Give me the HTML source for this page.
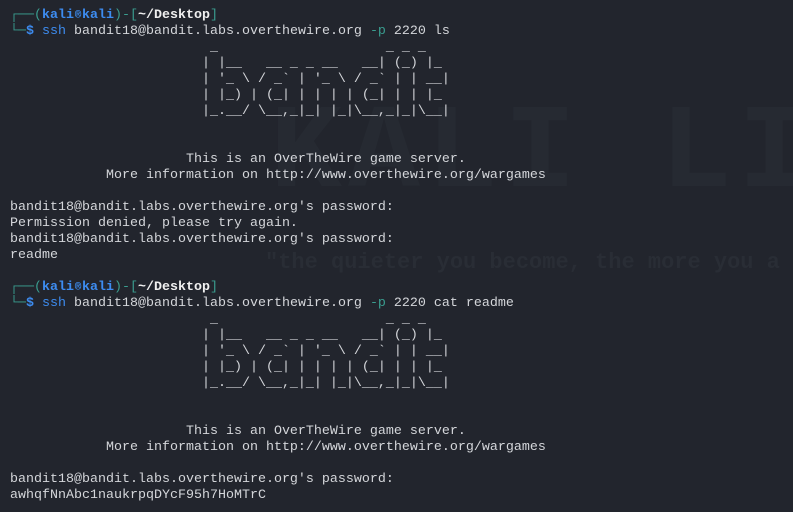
<!DOCTYPE html>
<html><head><meta charset="utf-8"><style>
html,body{margin:0;padding:0;}
body{width:793px;height:512px;overflow:hidden;background:#22252d;position:relative;}
.wm{position:absolute;font-family:"Liberation Mono",monospace;white-space:pre;overflow:hidden;}
pre{position:absolute;left:10px;top:8px;margin:0;font-family:"Liberation Mono","DejaVu Sans Mono",monospace;font-size:13.33px;line-height:16px;color:#d4d6da;}
.g{color:#3a9d8f}.b{color:#3d8cf0;font-weight:bold}.w{color:#f0f0f0;font-weight:bold}.c{color:#3d8cf0}.t{color:#3a9d8f}
.r{display:inline-block;width:8px;text-align:center;font-size:11px}
</style></head><body>
<div class="wm" style="left:270px;top:95px;width:523px;font-size:120px;line-height:120px;font-weight:bold;color:#262a32;letter-spacing:6px">KALI LINU</div>
<div class="wm" style="left:265px;top:250px;width:528px;font-size:22px;font-weight:bold;color:#292d35">"the quieter you become, the more you a</div>
<pre><span class="g">┌──(</span><span class="b">kali<span class="r">®</span>kali</span><span class="g">)-[</span><span class="w">~/Desktop</span><span class="g">]</span>
<span class="g">└─</span><span class="b">$</span> <span class="c">ssh</span> bandit18@bandit.labs.overthewire.org <span class="t">-p</span> 2220 ls
                         _                     _ _ _
                        | |__   __ _ _ __   __| (_) |_
                        | '_ \ / _` | '_ \ / _` | | __|
                        | |_) | (_| | | | | (_| | | |_
                        |_.__/ \__,_|_| |_|\__,_|_|\__|


                      This is an OverTheWire game server.
            More information on http://www.overthewire.org/wargames

bandit18@bandit.labs.overthewire.org's password:
Permission denied, please try again.
bandit18@bandit.labs.overthewire.org's password:
readme

<span class="g">┌──(</span><span class="b">kali<span class="r">®</span>kali</span><span class="g">)-[</span><span class="w">~/Desktop</span><span class="g">]</span>
<span class="g">└─</span><span class="b">$</span> <span class="c">ssh</span> bandit18@bandit.labs.overthewire.org <span class="t">-p</span> 2220 cat readme
                         _                     _ _ _
                        | |__   __ _ _ __   __| (_) |_
                        | '_ \ / _` | '_ \ / _` | | __|
                        | |_) | (_| | | | | (_| | | |_
                        |_.__/ \__,_|_| |_|\__,_|_|\__|


                      This is an OverTheWire game server.
            More information on http://www.overthewire.org/wargames

bandit18@bandit.labs.overthewire.org's password:
awhqfNnAbc1naukrpqDYcF95h7HoMTrC</pre>
</body></html>
